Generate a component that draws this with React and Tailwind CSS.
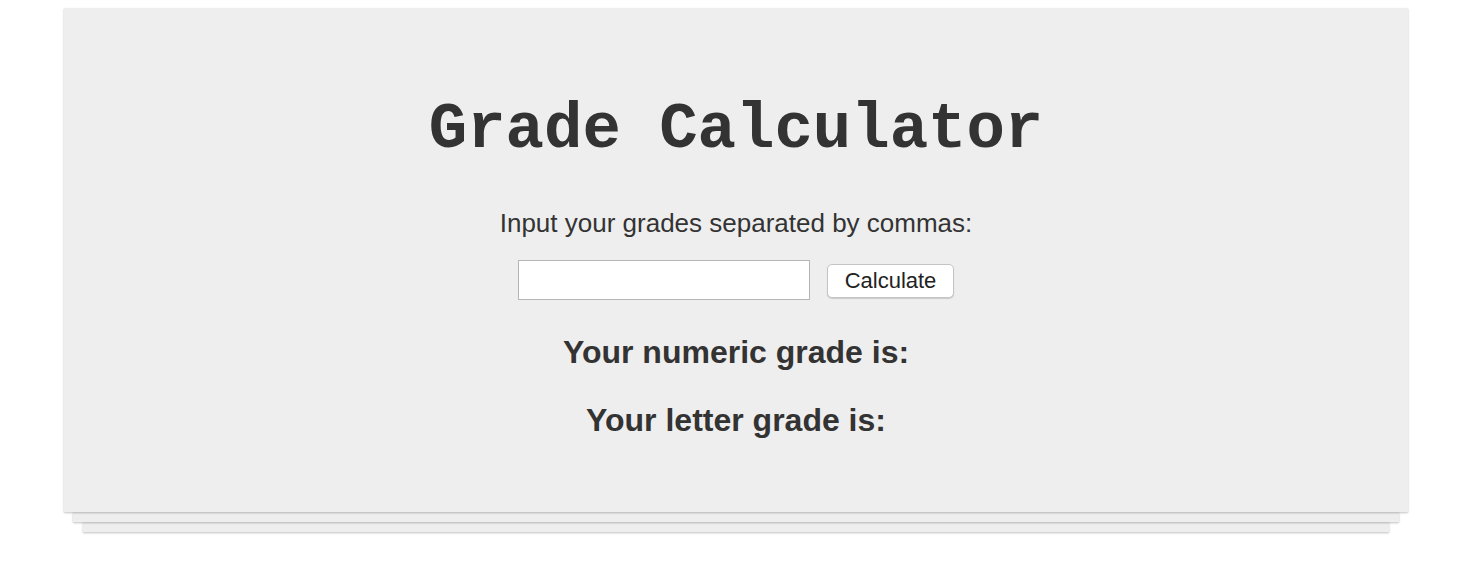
export default function App() {
  return (
    <div className="min-h-[562px] bg-white pt-[8px]" style={{ fontFamily: '"Liberation Sans", Arial, sans-serif' }}>
      <div className="ml-[64px] w-[1344px] flex flex-col">
        <div className="relative z-[3] h-[504px] bg-[#eeeeee] shadow-[0_1px_2px_rgba(0,0,0,0.25)] flex flex-col items-center text-[#333333]">
          <h1 className="mt-[84px] text-[64px] leading-[76px] font-bold" style={{ fontFamily: '"Liberation Mono", "Courier New", monospace' }}>
            Grade Calculator
          </h1>
          <p className="mt-[40px] text-[26px] leading-[30px]">Input your grades separated by commas:</p>
          <div className="mt-[22px] flex items-center gap-[17px]">
            <input type="text" className="w-[292px] h-[40px] bg-white border border-[#b5b5b5] outline-none" />
            <button className="mt-[2px] h-[34px] px-[17px] bg-white border border-[#c4c4c4] rounded-[5px] shadow-[0_1px_1px_rgba(0,0,0,0.15)] text-[22px] leading-[26px] text-[#222]" style={{ fontFamily: '"Liberation Sans", Arial, sans-serif' }}>
              Calculate
            </button>
          </div>
          <h2 className="mt-[33px] text-[32px] leading-[38px] font-bold">Your numeric grade is:</h2>
          <h2 className="mt-[30px] text-[32px] leading-[38px] font-bold">Your letter grade is:</h2>
        </div>
        <div className="relative z-[2] mx-[9px] h-[10px] bg-[#eeeeee] shadow-[0_1px_2px_rgba(0,0,0,0.25)]"></div>
        <div className="relative z-[1] mx-[19px] h-[10px] bg-[#eeeeee] shadow-[0_1px_2px_rgba(0,0,0,0.25)]"></div>
      </div>
    </div>
  );
}
